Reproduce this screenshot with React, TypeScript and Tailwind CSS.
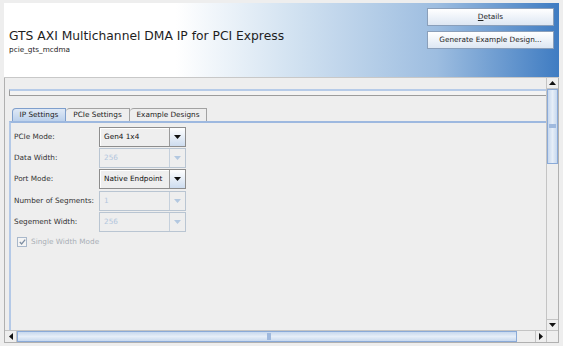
import React from "react";

const font = "font-['DejaVu_Sans',sans-serif]";

function Arrow({dir, color}: {dir: "up" | "down" | "left" | "right"; color: string}) {
    const pts = {
        down: "0,0 7,0 3.5,4",
        up: "0,4 7,4 3.5,0",
        left: "4,0 4,7 0,3.5",
        right: "0,0 0,7 4,3.5",
    }[dir];
    const vertical = dir === "up" || dir === "down";
    return (
        <svg width={vertical ? 7 : 4} height={vertical ? 4 : 7} viewBox={vertical ? "0 0 7 4" : "0 0 4 7"}>
            <polygon points={pts} fill={color}/>
        </svg>
    );
}

function Combo({value, disabled}: {value: string; disabled?: boolean}) {
    return (
        <div
            className={`flex h-[20px] w-[87px] border ${disabled ? "border-[#b9c5d2]" : "border-[#8d8d8d]"} bg-[#eeeeee]`}>
            <div
                className={`flex flex-1 items-center pl-[4px] text-[7.3px] border-r ${disabled ? "text-[#b3c6dd] border-[#c5d0dc]" : "text-[#111] border-[#9a9a9a] shadow-[inset_1px_1px_0_#ffffff]"}`}>
                {value}
            </div>
            <div
                className={`flex w-[15px] items-center justify-center ${disabled ? "" : "bg-[linear-gradient(to_bottom,#ffffff,#cddcef)]"}`}>
                <Arrow dir="down" color={disabled ? "#b3c8e0" : "#111"}/>
            </div>
        </div>
    );
}

function Row({label, value, disabled}: {label: string; value: string; disabled?: boolean}) {
    return (
        <div className="flex h-[20px] items-center">
            <div className="w-[85px] text-[7.3px] text-[#333]">{label}</div>
            <Combo value={value} disabled={disabled}/>
        </div>
    );
}

export default function App() {
    return (
        <div className={`w-[563px] h-[346px] bg-[#eeeeee] px-[4px] pt-[3px] overflow-hidden ${font}`}>
            {/* header */}
            <div
                className="flex h-[75px] justify-between border-b border-[#c8c8c8] bg-[linear-gradient(to_right,#ffffff_31%,#d2e2f1_52%,#9dbde0_78%,#3f7cc2_100%)]">
                <div className="pl-[5px] pt-[27px]">
                    <div className="text-[12.3px] leading-none text-[#1e1e1e] whitespace-nowrap">
                        GTS AXI Multichannel DMA IP for PCI Express
                    </div>
                    <div className="mt-[4px] text-[7.3px] leading-none text-[#1e1e1e]">pcie_gts_mcdma</div>
                </div>
                <div className="flex flex-col gap-[5px] pt-[5px] pr-[5px]">
                    <button
                        className="flex h-[18px] w-[127px] items-center justify-center border border-[#8a9fba] bg-[linear-gradient(to_bottom,#ffffff,#dde7f3)] text-[7.3px] text-[#222]">
                        <span><span className="underline">D</span>etails</span>
                    </button>
                    <button
                        className="flex h-[18px] w-[127px] items-center justify-center border border-[#8a9fba] bg-[linear-gradient(to_bottom,#ffffff,#dde7f3)] text-[7.3px] text-[#222]">
                        Generate Example Design...
                    </button>
                </div>
            </div>

            {/* body */}
            <div className="grid h-[265px] grid-cols-[1fr_12px] grid-rows-[1fr_12px] border-x border-b border-[#b0b0b0]">
                <div className="overflow-hidden pl-[4px]">
                    <div className="w-[600px]">
                        <div
                            className="mt-[11px] h-[7px] border-t-2 border-b border-t-[#b6cbe8] border-b-[#9c9c9c] border-l border-l-[#9c9c9c] bg-[#f3f3f3]"/>
                        {/* tabs */}
                        <div className="mt-[12px] flex pl-[3px]">
                            <div
                                className="flex h-[13px] w-[54px] items-center justify-center rounded-tl-[4px] border border-b-0 border-[#7f9fcc] bg-[linear-gradient(to_bottom,#dfe9f6,#bcd1ec)] text-[7.3px] text-[#222]">
                                IP Settings
                            </div>
                            <div
                                className="flex h-[13px] w-[64px] items-center justify-center rounded-tl-[4px] border border-b-0 border-l-0 border-[#a2a2a2] text-[7.3px] text-[#222]">
                                PCIe Settings
                            </div>
                            <div
                                className="flex h-[13px] w-[77px] items-center justify-center rounded-tl-[4px] border border-b-0 border-l-0 border-[#a2a2a2] text-[7.3px] text-[#222]">
                                Example Designs
                            </div>
                        </div>
                        <div className="h-[240px] border-t-2 border-l-2 border-t-[#9db8df] border-l-[#b4c9e7] pl-[3px] pt-[4px]">
                            <div className="flex flex-col gap-[1px]">
                                <Row label="PCIe Mode:" value="Gen4 1x4"/>
                                <Row label="Data Width:" value="256" disabled/>
                                <Row label="Port Mode:" value="Native Endpoint"/>
                                <div className="mt-[1px]">
                                    <Row label="Number of Segments:" value="1" disabled/>
                                </div>
                                <Row label="Segement Width:" value="256" disabled/>
                            </div>
                            <div className="mt-[5px] flex items-center gap-[4px] pl-[3px]">
                                <div
                                    className="flex h-[10px] w-[10px] items-center justify-center border border-[#a9b8cb] bg-[#f4f4f4]">
                                    <svg width="7" height="6" viewBox="0 0 7 6">
                                        <polyline points="0.8,3 2.6,5 6.2,0.6" fill="none" stroke="#7f8fa3"
                                                  strokeWidth="1.3"/>
                                    </svg>
                                </div>
                                <span className="text-[7.3px] text-[#a9afb6]">Single Width Mode</span>
                            </div>
                        </div>
                    </div>
                </div>

                {/* vertical scrollbar */}
                <div className="flex flex-col border-l border-[#c4c4c4]">
                    <div className="flex h-[11px] items-center justify-center border-b border-[#c4c4c4]">
                        <Arrow dir="up" color="#111"/>
                    </div>
                    <div
                        className="relative h-[75px] border-x border-y border-[#8aaad8] bg-[linear-gradient(to_right,#c7d8ee,#e6eef8_50%,#c7d8ee)]">
                        <div className="absolute left-[1px] right-[1px] top-[34px] h-[4px] bg-[#9fb9de]"/>
                    </div>
                    <div className="flex-1"/>
                    <div className="flex h-[11px] items-center justify-center border-t border-[#c4c4c4]">
                        <Arrow dir="down" color="#111"/>
                    </div>
                </div>

                {/* horizontal scrollbar */}
                <div className="flex border-t border-[#c4c4c4]">
                    <div className="flex w-[12px] items-center justify-center border-r border-[#c4c4c4]">
                        <Arrow dir="left" color="#111"/>
                    </div>
                    <div
                        className="relative w-[500px] border border-[#8aaad8] bg-[linear-gradient(to_bottom,#c7d8ee,#e6eef8_50%,#c7d8ee)]">
                        <div className="absolute top-[1px] bottom-[1px] left-[249px] w-[4px] bg-[#9fb9de]"/>
                    </div>
                    <div className="flex-1"/>
                    <div className="flex w-[11px] items-center justify-center border-l border-[#c4c4c4]">
                        <Arrow dir="right" color="#111"/>
                    </div>
                </div>
                <div className="border-t border-l border-[#c4c4c4]"/>
            </div>
        </div>
    );
}
